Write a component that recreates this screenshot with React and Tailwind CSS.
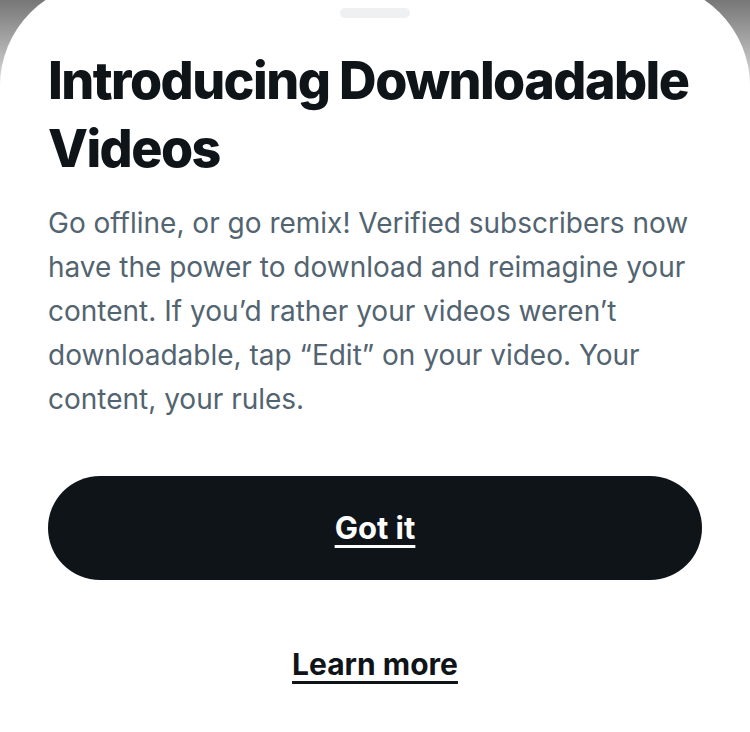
export default function App() {
    return (
        <div className="min-h-screen w-[750px] h-[732px] overflow-hidden bg-gradient-to-b from-[#777777] via-[#bdbdbd] via-60% to-white bg-no-repeat [background-size:100%_100px] bg-white">
            <div className="mt-[-18px] h-[750px] rounded-t-[104px] bg-white px-12 flex flex-col" style={{ fontFamily: "Inter, 'Noto Sans', sans-serif" }}>
                <div className="mt-[26px] mx-auto h-[10px] w-[70px] rounded-full bg-[#eef0f1]" />
                <h1 className="mt-[29px] text-[52px] leading-[68px] font-extrabold tracking-[-0.03em] text-[#0f1419]">
                    Introducing Downloadable Videos
                </h1>
                <p className="mt-[18px] text-[28px] leading-[44px] text-[#536471]">
                    Go offline, or go remix! Verified subscribers now have the power to download and reimagine your content. If you’d rather your videos weren’t downloadable, tap “Edit” on your video. Your content, your rules.
                </p>
                <button className="mt-[55px] h-[104px] w-full rounded-full bg-[#0f1419] text-white text-[31px] font-bold underline underline-offset-[6px] decoration-[3px]">
                    Got it
                </button>
                <button className="mt-[62px] mx-auto text-[30px] font-bold text-[#0f1419] underline underline-offset-[6px] decoration-[3px]">
                    Learn more
                </button>
            </div>
        </div>
    );
}
